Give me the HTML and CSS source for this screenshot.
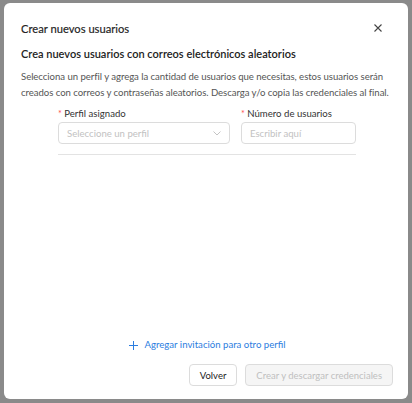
FILE: index.html
```html
<!DOCTYPE html>
<html lang="es">
<head>
    <meta charset="UTF-8">
    <meta name="viewport" content="width=device-width, initial-scale=1.0">
    <title>Crear nuevos usuarios</title>
    <link rel="stylesheet" href="styles.css">
</head>
<body>
    <div class="overlay">
        <div class="modal">
            <div class="modal-header">
                <span class="modal-title">Crear nuevos usuarios</span>
                <button type="button" class="close-btn" aria-label="Cerrar">
                    <svg width="8" height="8" viewBox="0 0 8 8"><path d="M0.5 0.5L7.5 7.5M7.5 0.5L0.5 7.5" stroke="#444" stroke-width="1.1" fill="none"/></svg>
                </button>
            </div>
            <div class="modal-body">
                <h3 class="subtitle">Crea nuevos usuarios con correos electrónicos aleatorios</h3>
                <p class="description">Selecciona un perfil y agrega la cantidad de usuarios que necesitas, estos usuarios serán creados con correos y contraseñas aleatorios. Descarga y/o copia las credenciales al final.</p>

                <div class="form-row">
                    <div class="field field-profile">
                        <label><span class="req">*</span> Perfil asignado</label>
                        <div class="select">
                            <span class="placeholder">Seleccione un perfil</span>
                            <svg width="8" height="5" viewBox="0 0 8 5"><path d="M0.5 0.5L4 4L7.5 0.5" stroke="#c4c4c4" stroke-width="1" fill="none"/></svg>
                        </div>
                    </div>
                    <div class="field field-count">
                        <label><span class="req">*</span> Número de usuarios</label>
                        <input type="text" placeholder="Escribir aquí">
                    </div>
                </div>
                <div class="divider"></div>

                <div class="spacer"></div>

                <a href="#" class="add-link">
                    <svg width="9" height="9" viewBox="0 0 9 9"><path d="M4.5 0V9M0 4.5H9" stroke="#2b7de0" stroke-width="1" fill="none"/></svg>
                    Agregar invitación para otro perfil
                </a>
            </div>
            <div class="modal-footer">
                <button type="button" class="btn">Volver</button>
                <button type="button" class="btn" disabled>Crear y descargar credenciales</button>
            </div>
        </div>
    </div>
</body>
</html>
```

FILE: styles.css
```css
html, body {
    margin: 0;
    padding: 0;
    height: 100%;
}
body {
    font-family: Lato, "Open Sans", Arial, sans-serif;
    background-color: #8a8a8a;
}
.overlay {
    height: 100%;
    padding: 3px 4px 4px 4px;
    box-sizing: border-box;
    display: flex;
}
.modal {
    flex: 1;
    background: white;
    border-radius: 6px;
    display: flex;
    flex-direction: column;
    padding: 0 15px 13px 17px;
}
.modal-header {
    display: flex;
    justify-content: space-between;
    align-items: center;
    height: 46px;
    margin-top: 2px;
    margin-bottom: -5px;
}
.modal-title {
    font-size: 11.2px;
    font-weight: 400;
    color: #222;
    -webkit-text-stroke: 0.15px #222;
}
.close-btn {
    background: none;
    border: none;
    padding: 0;
    margin-right: 11px;
    cursor: pointer;
    display: flex;
}
.modal-body {
    flex: 1;
    display: flex;
    flex-direction: column;
}
.subtitle {
    margin: 0;
    font-size: 11px;
    font-weight: 600;
    color: #222;
    line-height: 16px;
}
.description {
    margin: 7px 0 0 0;
    font-size: 9.6px;
    letter-spacing: -0.05px;
    line-height: 16px;
    color: #555;
}
.form-row {
    display: flex;
    gap: 11px;
    width: 298px;
    margin: 6px auto 0 auto;
}
.field {
    display: flex;
    flex-direction: column;
}
.field-profile {
    width: 172px;
}
.field-count {
    width: 115px;
}
.field label {
    font-size: 9.6px;
    color: #333;
    line-height: 14px;
    margin-bottom: 1px;
}
.req {
    color: #ff4d4f;
    font-size: 9px;
}
.select, .field input {
    height: 22px;
    box-sizing: border-box;
    border: 1px solid #dcdcdc;
    border-radius: 4px;
    font-family: inherit;
    font-size: 9.6px;
    padding: 0 8px;
}
.select {
    display: flex;
    justify-content: space-between;
    align-items: center;
}
.placeholder, .field input::placeholder {
    color: #c2c2c2;
}
.divider {
    width: 298px;
    margin: 10px auto 0 auto;
    border-top: 1px solid #e3e3e3;
}
.spacer {
    flex: 1;
}
.add-link {
    align-self: center;
    display: flex;
    align-items: center;
    gap: 7px;
    font-size: 9.6px;
    line-height: 14px;
    color: #2b7de0;
    text-decoration: none;
    margin-bottom: 12px;
}
.modal-footer {
    display: flex;
    justify-content: flex-end;
    gap: 8px;
}
.btn {
    height: 22px;
    padding: 0 10px;
    font-family: inherit;
    font-size: 9.5px;
    color: #222;
    background: white;
    border: 1px solid #dcdcdc;
    border-radius: 4px;
    cursor: pointer;
}
.btn:disabled {
    background: #f5f5f5;
    color: #bfbfbf;
    cursor: not-allowed;
}
```
